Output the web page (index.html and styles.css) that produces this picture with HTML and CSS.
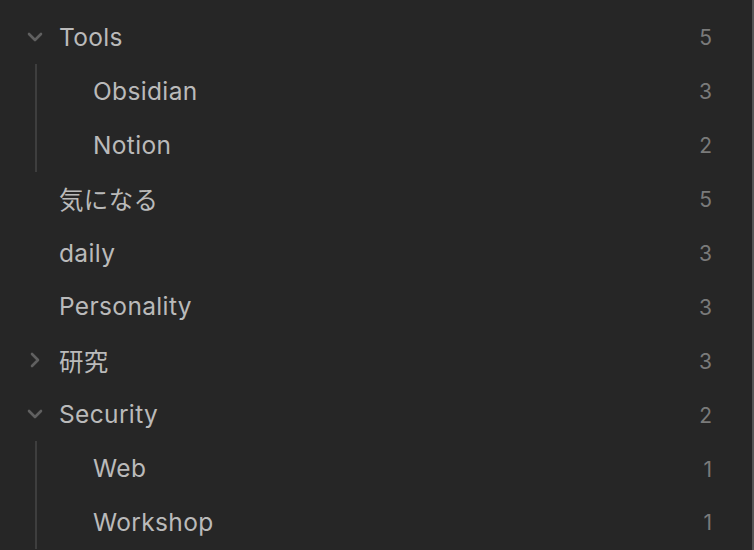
FILE: index.html
```html
<!DOCTYPE html>
<html lang="ja">
<head>
<meta charset="utf-8">
<link rel="stylesheet" href="styles.css">
</head>
<body>
<div class="pane">
  <div class="tree">
    <div class="item">
      <div class="row">
        <span class="chev"><svg viewBox="0 0 20 20" width="20" height="20"><path d="M4 7 L10 13 L16 7" /></svg></span>
        <span class="label">Tools</span><span class="count">5</span>
      </div>
      <div class="children">
        <div class="row child"><span class="label">Obsidian</span><span class="count">3</span></div>
        <div class="row child"><span class="label">Notion</span><span class="count">2</span></div>
      </div>
    </div>
    <div class="row"><span class="chev"></span><span class="label">気になる</span><span class="count">5</span></div>
    <div class="row"><span class="chev"></span><span class="label">daily</span><span class="count">3</span></div>
    <div class="row"><span class="chev"></span><span class="label">Personality</span><span class="count">3</span></div>
    <div class="row">
      <span class="chev"><svg viewBox="0 0 20 20" width="20" height="20"><path d="M7 4 L13 10 L7 16" /></svg></span>
      <span class="label">研究</span><span class="count">3</span>
    </div>
    <div class="item">
      <div class="row">
        <span class="chev"><svg viewBox="0 0 20 20" width="20" height="20"><path d="M4 7 L10 13 L16 7" /></svg></span>
        <span class="label">Security</span><span class="count">2</span>
      </div>
      <div class="children">
        <div class="row child"><span class="label">Web</span><span class="count">1</span></div>
        <div class="row child"><span class="label">Workshop</span><span class="count">1</span></div>
      </div>
    </div>
  </div>
</div>
</body>
</html>
```
FILE: styles.css
```css
html, body {
  margin: 0;
  padding: 0;
  background: #262626;
  height: 100%;
  overflow: hidden;
}
.pane {
  width: 752px;
  height: 550px;
  border-right: 2px solid #555555;
  font-family: Inter, "Noto Sans CJK JP", sans-serif;
  overflow: hidden;
}
.tree {
  padding-top: 10px;
}
.row {
  display: flex;
  align-items: center;
  height: 53.9px;
  padding-left: 25px;
  color: #bababa;
  font-size: 24.5px;
  letter-spacing: 0.35px;
}
.chev {
  width: 34px;
  display: flex;
  align-items: center;
}
.chev svg {
  fill: none;
  stroke: #606060;
  stroke-width: 2.6;
  stroke-linecap: round;
  stroke-linejoin: round;
}
.label {
  flex: 1;
  white-space: nowrap;
}
.count {
  color: #7a7a7a;
  font-size: 21px;
  letter-spacing: 0;
  padding-top: 2px;
  padding-right: 40px;
}
.children {
  margin-left: 35px;
  border-left: 2px solid #3e3e3e;
}
.row.child {
  padding-left: 56px;
}
```
